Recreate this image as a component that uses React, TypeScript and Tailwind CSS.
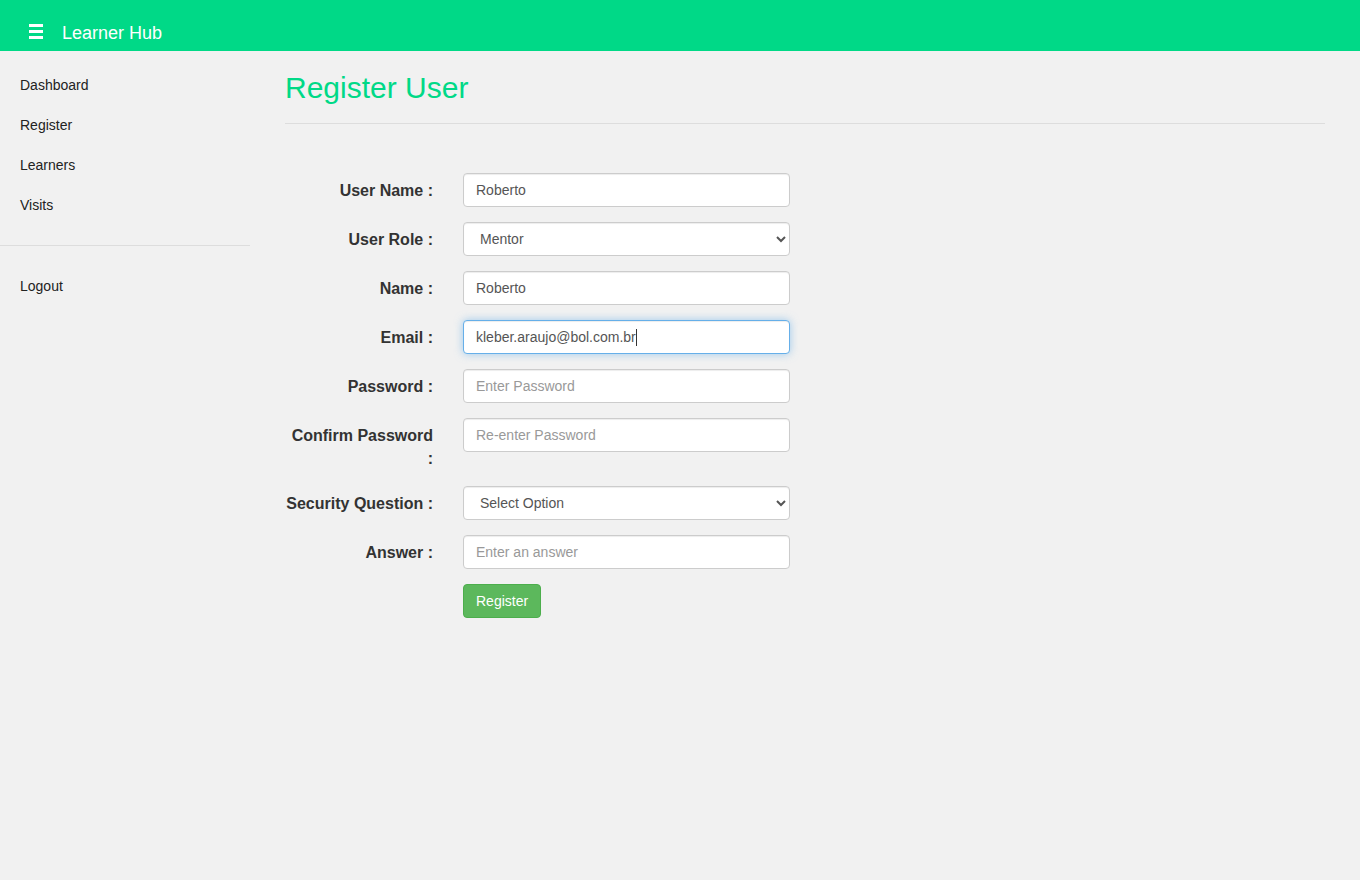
import React from "react";

const font = { fontFamily: '"Liberation Sans", Arial, Helvetica, sans-serif' };

function Row({ label, children }: { label: string; children: React.ReactNode }) {
  return (
    <div className="flex items-start mb-[15px]">
      <label className="w-[148px] shrink-0 text-right text-[16px] font-bold leading-[22.86px] text-[#333] pt-[7px]">
        {label}
      </label>
      <div className="ml-[30px] w-[327px]">{children}</div>
    </div>
  );
}

const inputCls =
  "block w-full h-[34px] px-[12px] py-[6px] text-[14px] leading-[20px] text-[#555] bg-white border border-[#ccc] rounded-[4px] shadow-[inset_0_1px_1px_rgba(0,0,0,0.075)] placeholder:text-[#999] outline-none";

const selectCls =
  "block w-full h-[34px] pl-[12px] pr-[4px] text-[14px] text-[#555] bg-white border border-[#ccc] rounded-[4px] shadow-[inset_0_1px_1px_rgba(0,0,0,0.075)] outline-none";

export default function App() {
  return (
    <div className="min-h-[880px] bg-[#f1f1f1]" style={font}>
      <header className="h-[51px] bg-[#00d987] flex items-start pt-[23px]">
        <div className="ml-[29px] mt-[1px] w-[14px] flex flex-col gap-[3px]">
          <span className="block h-[3px] bg-white" />
          <span className="block h-[3px] bg-white" />
          <span className="block h-[3px] bg-white" />
        </div>
        <span className="ml-[19px] text-[18px] leading-[20px] text-white">Learner Hub</span>
      </header>
      <div className="flex">
        <aside className="w-[250px] shrink-0 pt-[14px]">
          <nav className="flex flex-col">
            {["Dashboard", "Register", "Learners", "Visits"].map((t) => (
              <a key={t} className="block px-[20px] py-[10px] text-[14px] leading-[20px] text-[#222]">
                {t}
              </a>
            ))}
          </nav>
          <div className="mt-[20px] border-t border-[#ddd]" />
          <a className="block mt-[20px] px-[20px] py-[10px] text-[14px] leading-[20px] text-[#222]">Logout</a>
        </aside>
        <main className="flex-1 pl-[35px] pr-[35px] pt-[20px]">
          <h1 className="text-[30px] leading-[33px] text-[#00d987] font-normal">Register User</h1>
          <hr className="mt-[19px] border-0 border-t border-[#ddd]" />
          <form className="mt-[49px]" onSubmit={(e) => e.preventDefault()}>
            <Row label="User Name :">
              <input className={inputCls} defaultValue="Roberto" />
            </Row>
            <Row label="User Role :">
              <select className={selectCls} defaultValue="Mentor">
                <option>Mentor</option>
                <option>Learner</option>
              </select>
            </Row>
            <Row label="Name :">
              <input className={inputCls} defaultValue="Roberto" />
            </Row>
            <Row label="Email :">
              <div className="relative">
                <input
                  className={inputCls + " !border-[#66afe9] !shadow-[inset_0_1px_1px_rgba(0,0,0,0.075),0_0_8px_rgba(102,175,233,0.6)]"}
                  defaultValue="kleber.araujo@bol.com.br"
                />
                <span className="absolute left-[173px] top-[9px] w-px h-[17px] bg-[#333]" />
              </div>
            </Row>
            <Row label="Password :">
              <input className={inputCls} type="password" placeholder="Enter Password" />
            </Row>
            <Row label="Confirm Password :">
              <input className={inputCls} type="password" placeholder="Re-enter Password" />
            </Row>
            <Row label="Security Question :">
              <select className={selectCls} defaultValue="Select Option">
                <option>Select Option</option>
              </select>
            </Row>
            <Row label="Answer :">
              <input className={inputCls} placeholder="Enter an answer" />
            </Row>
            <div className="ml-[178px]">
              <button className="h-[34px] px-[12px] text-[14px] leading-[20px] text-white bg-[#5cb85c] border border-[#4cae4c] rounded-[4px]">
                Register
              </button>
            </div>
          </form>
        </main>
      </div>
    </div>
  );
}
